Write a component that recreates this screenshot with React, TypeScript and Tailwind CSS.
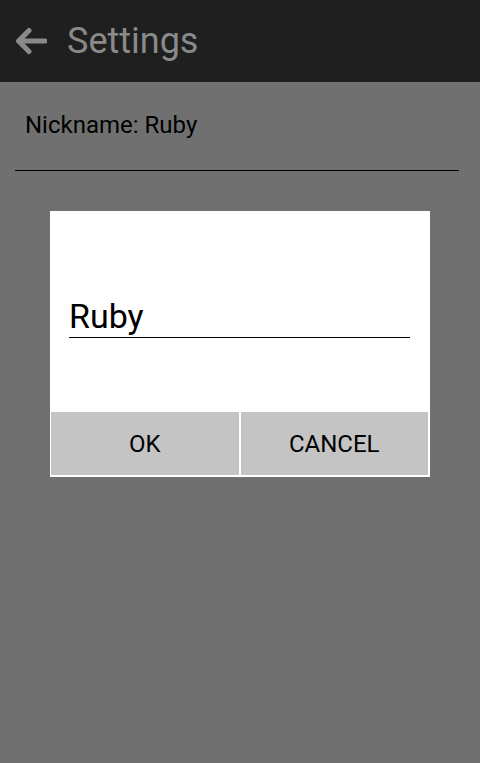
import React from "react";

function BackArrow() {
  return (
    <svg width="32" height="28" viewBox="0 0 32 28" fill="none" aria-hidden="true">
      <path
        d="M30 14H5M14 3.5L3.5 14L14 24.5"
        stroke="#8a8a8a"
        strokeWidth="5"
        strokeLinecap="round"
        strokeLinejoin="round"
      />
    </svg>
  );
}

export default function App() {
  return (
    <div className="relative w-[480px] h-[763px] bg-[#707070] overflow-hidden font-['Roboto','Liberation_Sans',sans-serif]">
      <header className="h-[82px] bg-[#1f1f1f] flex items-center pl-[15px]">
        <BackArrow />
        <span className="ml-[20px] text-[36px] leading-[36px] text-[#8a8a8a]">Settings</span>
      </header>

      <div className="pt-[31px]">
        <div className="pl-[25px] text-[24px] leading-[24px] text-black">Nickname: Ruby</div>
        <div className="mt-[33px] ml-[15px] w-[444px] h-px bg-black" />
      </div>

      <div className="absolute left-[50px] top-[211px] w-[380px] h-[266px] bg-white flex flex-col">
        <div className="flex-1 pt-[88px] pl-[19px] pr-[20px]">
          <div className="h-[39px] border-b border-black text-[34px] leading-[34px] text-black">Ruby</div>
        </div>
        <div className="flex gap-[2px] pl-px pr-[2px] pb-[2px]">
          <button
            type="button"
            className="flex-1 h-[63px] bg-[#c4c4c4] flex items-center justify-center text-[24px] leading-[24px] text-black"
          >
            OK
          </button>
          <button
            type="button"
            className="flex-1 h-[63px] bg-[#c4c4c4] flex items-center justify-center text-[24px] leading-[24px] text-black"
          >
            CANCEL
          </button>
        </div>
      </div>
    </div>
  );
}
